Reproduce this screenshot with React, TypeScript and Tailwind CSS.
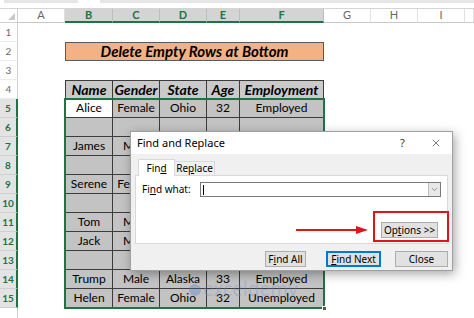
import { X, ChevronDown } from "lucide-react";

const colNames = ["A", "B", "C", "D", "E", "F", "G", "H", "I", ""];
const tableCols = ["B", "C", "D", "E", "F"];

// rows 4..15, columns B..F (cells under the dialog stay blank)
const table: string[][] = [
  ["Name", "Gender", "State", "Age", "Employment"],
  ["Alice", "Female", "Ohio", "32", "Employed"],
  ["", "", "", "", ""],
  ["James", "Male", "", "", ""],
  ["", "", "", "", ""],
  ["Serene", "Female", "", "", ""],
  ["", "", "", "", ""],
  ["Tom", "Male", "", "", ""],
  ["Jack", "Male", "", "", ""],
  ["", "", "", "", ""],
  ["Trump", "Male", "Alaska", "33", "Employed"],
  ["Helen", "Female", "Ohio", "32", "Unemployed"],
];

const sheetFont = { fontFamily: "Lato, 'Liberation Sans', sans-serif" };
const uiFont = { fontFamily: "'Noto Sans', 'Open Sans', sans-serif" };

function RowHeader({ n }: { n: number }) {
  const sel = n >= 5;
  return (
    <div
      className={
        sel
          ? "flex items-center justify-center bg-[#e3e3e3] text-[#217346] font-bold text-[10px] border-b border-[#cfcfcf] border-r-2 border-r-[#217346]"
          : "flex items-center justify-center bg-white text-[#6b6b6b] text-[10px] border-b border-[#ececec] border-r border-r-[#d0d0d0]"
      }
    >
      {n}
    </div>
  );
}

function Blank() {
  return <div className="bg-white" />;
}

function TableCell({ text, row, col }: { text: string; row: number; col: number }) {
  const header = row === 4;
  const active = row === 5 && col === 0;
  return (
    <div
      className={[
        "flex items-center justify-center border-r border-b border-[#3c3c3c] text-black overflow-hidden whitespace-nowrap",
        col === 0 ? "border-l" : "",
        header ? "border-t bg-[#cacaca] font-bold italic text-[14px]" : "text-[12px]",
        active ? "bg-white" : header ? "" : "bg-[#c3c3c3]",
      ].join(" ")}
    >
      {text}
    </div>
  );
}

function Btn({ children, primary, w }: { children: React.ReactNode; primary?: boolean; w: string }) {
  return (
    <div
      className={`${w} h-[16px] flex items-center justify-center text-[10px] text-black bg-[#e1e1e1] ${
        primary ? "border-2 border-[#0078d7]" : "border border-[#adadad]"
      }`}
    >
      {children}
    </div>
  );
}

export default function App() {
  const rows = Array.from({ length: 15 }, (_, i) => i + 1);
  return (
    <div className="relative w-[474px] h-[318px] overflow-hidden bg-white" style={sheetFont}>
      {/* formula bar remnant */}
      <div className="h-[9px] flex gap-[22px] pl-[4px] border-b border-[#d4d4d4]">
        <div className="w-[74px] h-[3px] bg-[#e6e6e6]" />
        <div className="flex-1 h-[3px] bg-[#e6e6e6]" />
      </div>

      <div className="grid grid-cols-[18px_47px_48px_47px_47px_33px_84px_47px_47px_47px_1fr] grid-rows-[14px_repeat(15,19px)_1fr] h-[309px]">
        {/* corner */}
        <div className="relative bg-white border-r border-b border-[#d0d0d0]">
          <div className="absolute right-[2px] bottom-[2px] w-0 h-0 border-l-[7px] border-l-transparent border-b-[7px] border-b-[#c8c8c8]" />
        </div>
        {colNames.map((c, i) =>
          tableCols.includes(c) ? (
            <div
              key={i}
              className="flex items-center justify-center bg-[#d4d4d4] text-[#217346] font-bold text-[11px] border-r border-[#bdbdbd] border-b-2 border-b-[#217346]"
            >
              {c}
            </div>
          ) : (
            <div
              key={i}
              className="flex items-center justify-center bg-white text-[#666] text-[11px] border-r border-[#e0e0e0] border-b border-b-[#c8c8c8]"
            >
              {c}
            </div>
          )
        )}

        {rows.map((r) => {
          const cells: React.ReactNode[] = [<RowHeader key="h" n={r} />, <Blank key="a" />];
          if (r === 2) {
            cells.push(
              <div
                key="title"
                className="col-span-5 flex items-center justify-center bg-[#f4b183] border border-[#5a5a5a] font-bold italic text-[15px] text-black"
              >
                Delete Empty Rows at Bottom
              </div>
            );
          } else if (r >= 4) {
            table[r - 4].forEach((t, ci) => cells.push(<TableCell key={ci} text={t} row={r} col={ci} />));
          } else {
            tableCols.forEach((c) => cells.push(<Blank key={c} />));
          }
          ["G", "H", "I", "J"].forEach((c) => cells.push(<Blank key={c} />));
          return cells;
        })}

        <div className="border-r border-[#d0d0d0] bg-white" />
        <div className="col-span-10 bg-white" />
      </div>

      {/* selection outline B5:F15 */}
      <div className="absolute left-[64px] top-[98px] w-[261px] h-[211px] border-2 border-[#217346] pointer-events-none">
        <div className="absolute -right-[4px] -bottom-[4px] w-[5px] h-[5px] bg-[#217346] border border-white" />
      </div>

      {/* watermark */}
      <div className="absolute left-[189px] top-[280px] flex items-center gap-[2px] opacity-30 pointer-events-none">
        <div className="w-[12px] h-[12px] rounded-full bg-[#4a74c9]" />
        <span className="text-[19px] text-[#6f8fd0] leading-none" style={uiFont}>
          exceldemy
        </span>
      </div>

      {/* Find and Replace dialog */}
      <div
        className="absolute left-[130px] top-[131px] w-[323px] h-[140px] flex flex-col bg-[#f0f0f0] border border-[#a0a0a0] shadow-[2px_3px_10px_rgba(0,0,0,0.35)]"
        style={uiFont}
      >
        <div className="h-[22px] bg-white flex items-center pl-[6px] pr-[10px] text-[11px] text-black">
          <span className="flex-1">Find and Replace</span>
          <span className="w-[20px] text-[11px] text-[#333]">?</span>
          <X size={12} strokeWidth={1.2} className="ml-[10px] text-[#222]" />
        </div>

        <div className="flex-1 flex flex-col px-[4px] pt-[4px]">
          <div className="flex items-end pl-[3px] h-[17px] text-[10px] text-black">
            <div className="w-[37px] h-[17px] flex items-center justify-center bg-white border border-[#d9d9d9] border-b-0 relative top-[1px]">
              Fin<u>d</u>
            </div>
            <div className="w-[40px] h-[14px] flex items-center justify-center bg-[#f0f0f0] border border-[#d9d9d9] border-l-0 border-b-0">
              Re<u>p</u>lace
            </div>
          </div>
          <div className="w-[313px] h-[69px] bg-white border border-[#d9d9d9] flex flex-col px-[6px] pt-[6px]">
            <div className="flex items-center h-[15px] text-[10px] text-black">
              <span className="w-[58px]">
                Fi<u>n</u>d what:
              </span>
              <div className="flex-1 h-[15px] flex items-center border border-[#7a7a7a] bg-white">
                <div className="ml-[2px] w-px h-[10px] bg-black" />
                <div className="ml-auto w-[12px] h-[13px] flex items-center justify-center bg-[#e8e8e8] border-l border-[#bdbdbd]">
                  <ChevronDown size={9} strokeWidth={1.5} className="text-[#555]" />
                </div>
              </div>
            </div>
            <div className="flex justify-end mt-[25px] pr-[3px]">
              <div className="w-[57px] h-[16px] flex items-center justify-center text-[10px] bg-[#e1e1e1] border border-[#adadad]">
                Op<u>t</u>ions &gt;&gt;
              </div>
            </div>
          </div>
          <div className="flex items-center mt-[7px] pl-[130px]">
            <Btn w="w-[41px]">
              F<u>i</u>nd All
            </Btn>
            <div className="w-[20px]" />
            <Btn w="w-[55px]" primary>
              <u>F</u>ind Next
            </Btn>
            <div className="w-[14px]" />
            <Btn w="w-[53px]">Close</Btn>
          </div>
        </div>
      </div>

      {/* red highlight box */}
      <div className="absolute left-[373px] top-[211px] w-[76px] h-[31px] border-[2.5px] border-[#e0141b]" />
      {/* red arrow */}
      <svg className="absolute left-[294px] top-[224px]" width="76" height="12" viewBox="0 0 76 12">
        <line x1="2" y1="6" x2="64" y2="6" stroke="#e0141b" strokeWidth="2" />
        <polygon points="62,2 74,6 62,10" fill="#e0141b" />
      </svg>
    </div>
  );
}
